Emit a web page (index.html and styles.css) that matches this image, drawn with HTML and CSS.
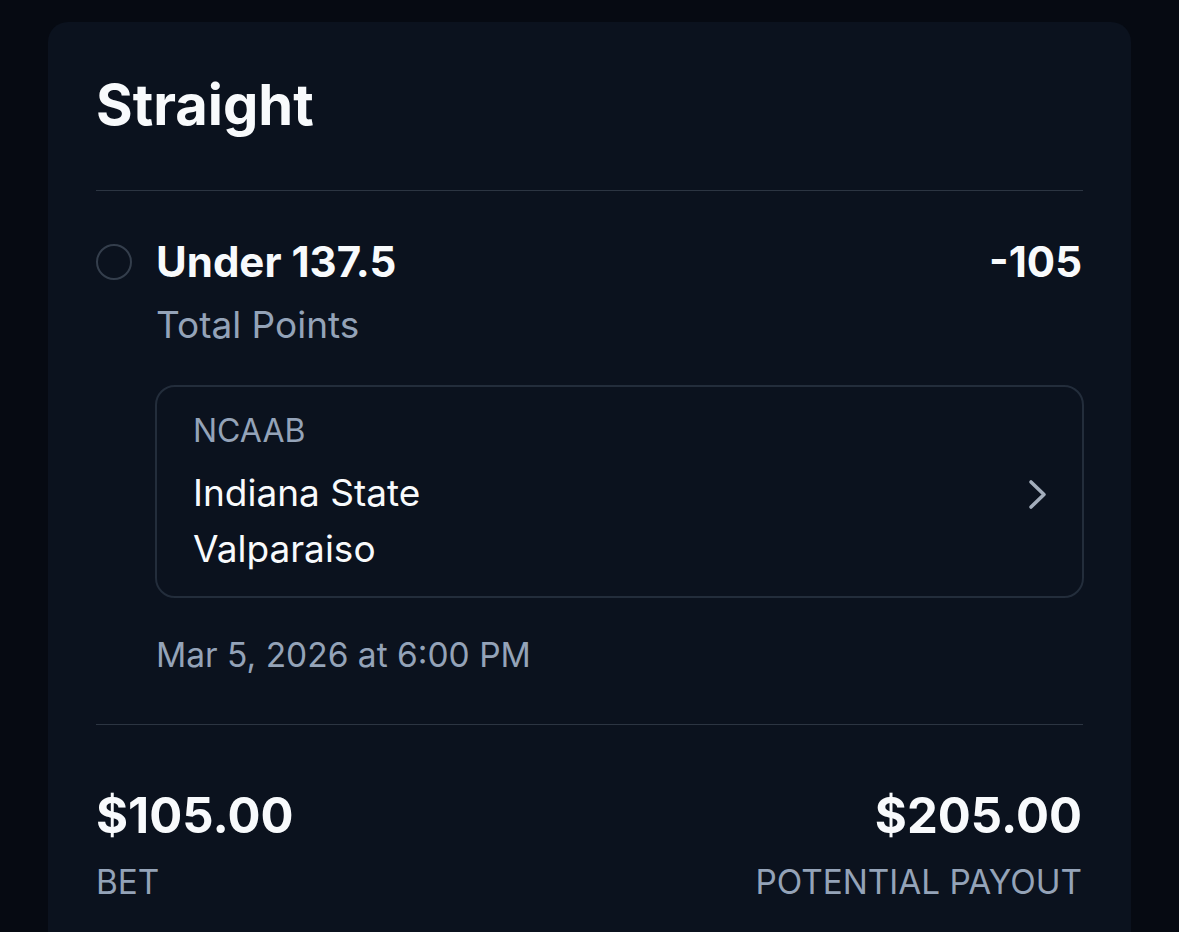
FILE: index.html
```html
<!DOCTYPE html>
<html lang="en">
<head>
    <meta charset="UTF-8">
    <meta name="viewport" content="width=device-width, initial-scale=1.0">
    <title>Straight</title>
    <link rel="stylesheet" href="styles.css">
</head>
<body>
    <main class="bet-card">
        <h1 class="bet-type">Straight</h1>
        <hr class="divider">

        <div class="selection">
            <span class="radio"></span>
            <div class="selection-body">
                <div class="selection-head">
                    <span class="pick">Under 137.5</span>
                    <span class="odds">-105</span>
                </div>
                <div class="market">Total Points</div>

                <a class="event-box" href="#">
                    <div class="event-info">
                        <div class="league">NCAAB</div>
                        <div class="team">Indiana State</div>
                        <div class="team">Valparaiso</div>
                    </div>
                    <svg class="chevron" width="20" height="31" viewBox="0 0 20 31">
                        <path d="M3 3 L16 15.5 L3 28" fill="none" stroke="#a3adbb" stroke-width="3.6" stroke-linecap="round" stroke-linejoin="round"/>
                    </svg>
                </a>

                <div class="event-date">Mar 5, 2026 at 6:00 PM</div>
            </div>
        </div>

        <hr class="divider">

        <div class="totals">
            <div class="total">
                <div class="amount">$105.00</div>
                <div class="label">BET</div>
            </div>
            <div class="total total-right">
                <div class="amount">$205.00</div>
                <div class="label">POTENTIAL PAYOUT</div>
            </div>
        </div>
    </main>
</body>
</html>
```

FILE: styles.css
```css
body {
    margin: 0;
    padding: 22px 48px 0;
    background-color: #060a12;
    font-family: Inter, "Noto Sans", sans-serif;
    color: #f8fafc;
    overflow: hidden;
}

.bet-card {
    background-color: #0b121e;
    border-radius: 20px;
    padding: 50px 48px 60px 48px;
}

.bet-type {
    margin: 0 0 51px;
    font-size: 56px;
    line-height: 1.2;
    font-weight: 700;
}

.divider {
    border: none;
    border-top: 1px solid #2c3542;
    margin: 0;
}

.selection {
    display: flex;
    align-items: flex-start;
    margin-top: 46px;
}

.radio {
    width: 32px;
    height: 32px;
    border: 2px solid #343e4c;
    border-radius: 50%;
    flex-shrink: 0;
    margin-top: 7px;
    margin-right: 24px;
}

.selection-body {
    flex: 1;
}

.selection-head {
    display: flex;
    justify-content: space-between;
    font-size: 42px;
    line-height: 1.2;
    font-weight: 700;
}

.odds {
    margin-right: 1px;
}

.market {
    margin-top: 15px;
    font-size: 37px;
    line-height: 1.2;
    color: #94a3b8;
}

.event-box {
    display: flex;
    align-items: center;
    justify-content: space-between;
    margin-top: 38px;
    margin-left: -1px;
    margin-right: -1px;
    padding: 25px 34px 19px 36px;
    border: 2px solid #232d3b;
    border-radius: 20px;
    text-decoration: none;
    color: #f8fafc;
}

.league {
    font-size: 32px;
    line-height: 1.2;
    color: #94a3b8;
    margin-bottom: 15px;
}

.team {
    font-size: 37px;
    line-height: 56px;
}

.event-date {
    margin-top: 37px;
    margin-bottom: 48px;
    font-size: 33.5px;
    line-height: 1.2;
    color: #94a3b8;
}

.totals {
    display: flex;
    justify-content: space-between;
    margin-top: 62px;
}

.total-right {
    text-align: right;
    margin-right: 1px;
}

.amount {
    font-size: 49px;
    line-height: 1.2;
    font-weight: 700;
}

.label {
    margin-top: 18px;
    font-size: 33.3px;
    line-height: 1.2;
    color: #94a3b8;
}
```
